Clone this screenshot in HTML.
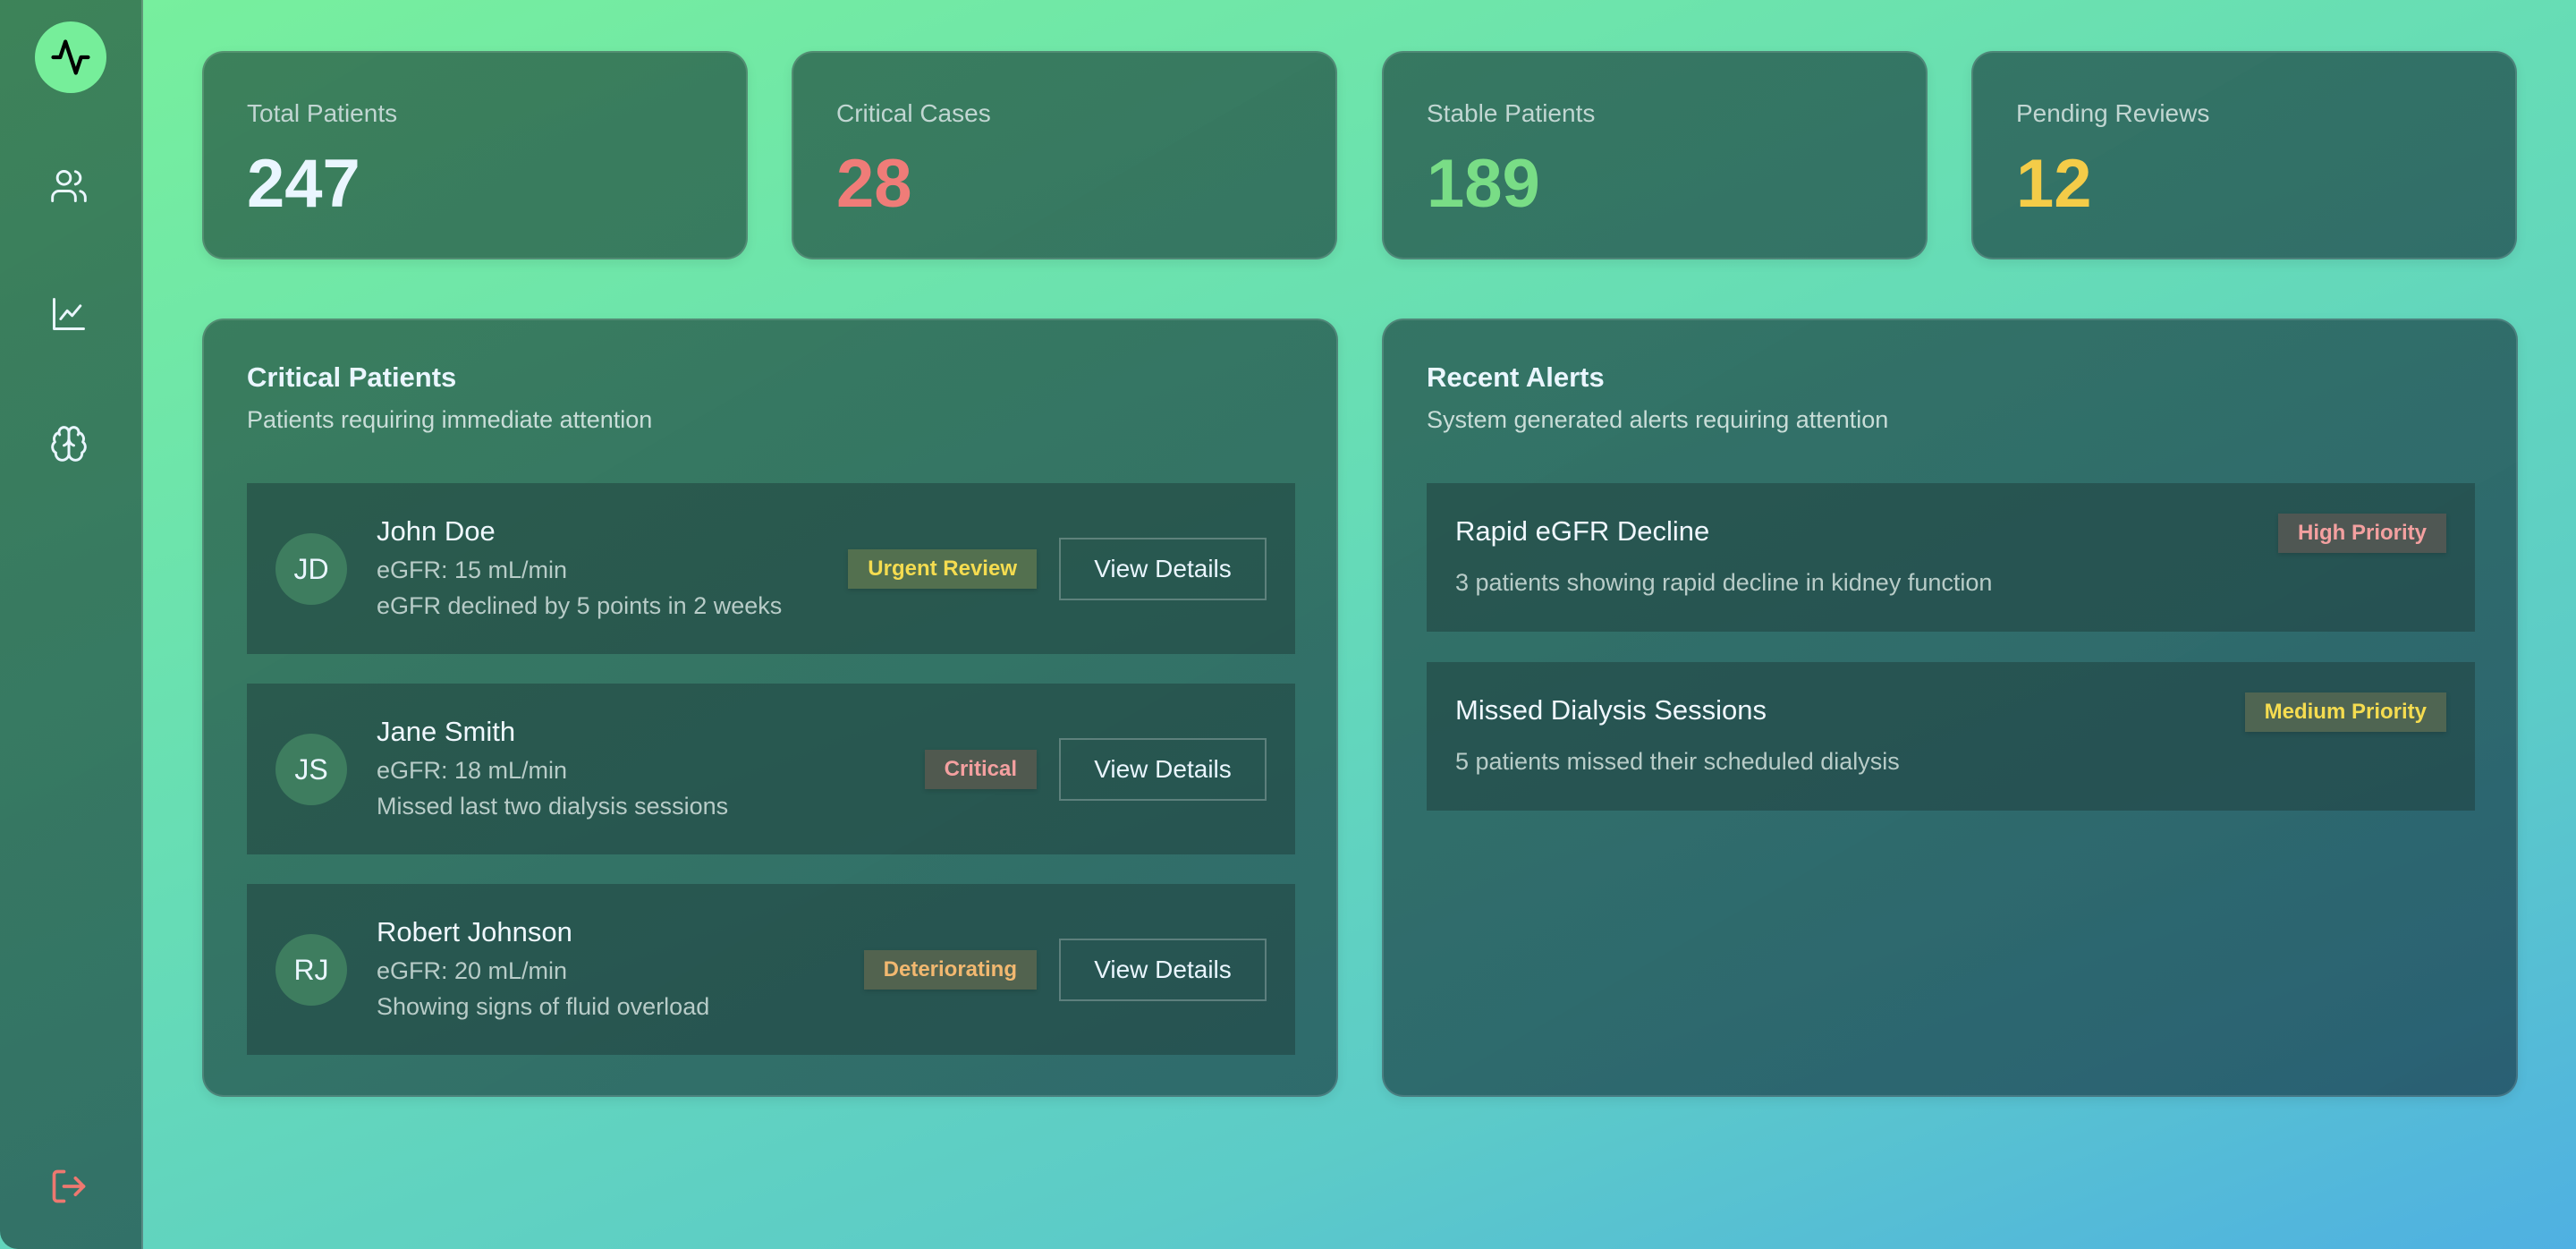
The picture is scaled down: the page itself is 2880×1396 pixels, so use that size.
<!DOCTYPE html>
<html><head><meta charset="utf-8"><style>
*{box-sizing:border-box;margin:0;padding:0}
html,body{width:2880px;height:1396px;overflow:hidden}
body{font-family:"Liberation Sans",sans-serif;background:linear-gradient(160deg,#78f09c 0%,#66dcb6 45%,#5ccbc8 75%,#4fb0e2 100%);position:relative;color:#eaf6ff}
.side{position:absolute;left:0;top:0;width:160px;height:1396px;background:linear-gradient(150deg,rgba(45,100,70,0.78),rgba(30,72,92,0.8)) fixed;border-right:2px solid rgba(255,255,255,0.18);border-radius:0 0 0 20px}
.logo{position:absolute;left:39px;top:24px;width:80px;height:80px;border-radius:50%;background:#76ee9a}
.ic{position:absolute;left:55px;width:44px;height:44px}
.card{position:absolute;background:linear-gradient(150deg,rgba(45,100,70,0.78),rgba(30,72,92,0.8)) fixed;border:2px solid rgba(255,255,255,0.13);border-radius:24px;box-shadow:0 4px 12px rgba(0,0,0,0.08)}
.stat{top:57px;width:610px;height:233px}
.lab{position:absolute;left:48px;top:52px;font-size:28px;color:#c1d6d2}
.num{position:absolute;left:48px;top:103px;font-size:76px;font-weight:bold}
.title{position:absolute;left:48px;font-size:31px;font-weight:bold}
.sub{position:absolute;left:48px;font-size:27px;color:#c9ddd8}
.row{position:absolute;background:rgba(30,60,58,0.5)}
.av{position:absolute;left:32px;width:80px;height:80px;border-radius:50%;background:#3e7d5f;font-size:32px;text-align:center;line-height:80px;color:#eaf6ff}
.nm{position:absolute;font-size:31px;color:#f0f8ff}
.ln{position:absolute;font-size:27px;color:#b8ccc8}
.badge{position:absolute;height:44px;line-height:44px;font-size:24px;font-weight:bold;padding:0 22px;box-shadow:0 2px 5px rgba(0,0,0,0.15)}
.btn{position:absolute;right:32px;width:232px;height:70px;border:2px solid rgba(255,255,255,0.25);font-size:28px;text-align:center;line-height:66px;color:#eaf6ff}
</style></head><body>
<div class="side">
<div class="logo"><svg width="80" height="80" viewBox="0 0 24 24"><g transform="translate(5,5) scale(0.583)"><path d="M22 12h-4l-3 9L9 3l-3 9H2" fill="none" stroke="#000" stroke-width="2.2" stroke-linecap="round" stroke-linejoin="round"/></g></svg></div>
<svg class="ic" style="top:186px" viewBox="0 0 24 24" fill="none" stroke="#eaf6ff" stroke-width="1.6" stroke-linecap="round" stroke-linejoin="round"><path d="M16 21v-2a4 4 0 0 0-4-4H6a4 4 0 0 0-4 4v2"/><circle cx="9" cy="7" r="4"/><path d="M22 21v-2a4 4 0 0 0-3-3.87"/><path d="M16 3.13a4 4 0 0 1 0 7.75"/></svg>
<svg class="ic" style="top:329px" viewBox="0 0 24 24" fill="none" stroke="#eaf6ff" stroke-width="1.6" stroke-linecap="round" stroke-linejoin="round"><path d="M3 3v18h18"/><path d="m7 15 4-5 3 3 5-6"/></svg>
<svg class="ic" style="top:474px" viewBox="0 0 24 24" fill="none" stroke="#eaf6ff" stroke-width="1.6" stroke-linecap="round" stroke-linejoin="round"><path d="M12 5a3 3 0 1 0-5.997.125 4 4 0 0 0-2.526 5.77 4 4 0 0 0 .556 6.588A4 4 0 1 0 12 18Z"/><path d="M12 5a3 3 0 1 1 5.997.125 4 4 0 0 1 2.526 5.77 4 4 0 0 1-.556 6.588A4 4 0 1 1 12 18Z"/><path d="M12 5v13"/><path d="M9 13a4.5 4.5 0 0 0 3-4"/><path d="M15 13a4.5 4.5 0 0 1-3-4"/><path d="M6.003 5.125A3 3 0 0 0 6.401 6.5"/><path d="M17.997 5.125a3 3 0 0 1-.398 1.375"/></svg>
<svg class="ic" style="top:1304px" viewBox="0 0 24 24" fill="none" stroke="#ee7870" stroke-width="2" stroke-linecap="round" stroke-linejoin="round"><path d="M9 21H5a2 2 0 0 1-2-2V5a2 2 0 0 1 2-2h4"/><path d="M16 17l5-5-5-5"/><path d="M21 12H9"/></svg>
</div>

<div class="card stat" style="left:226px"><div class="lab">Total Patients</div><div class="num" style="color:#eaf6ff">247</div></div>
<div class="card stat" style="left:885px"><div class="lab">Critical Cases</div><div class="num" style="color:#ef7c78">28</div></div>
<div class="card stat" style="left:1545px"><div class="lab">Stable Patients</div><div class="num" style="color:#79dd86">189</div></div>
<div class="card stat" style="left:2204px"><div class="lab">Pending Reviews</div><div class="num" style="color:#f4cc48">12</div></div>

<div class="card" style="left:226px;top:356px;width:1270px;height:870px">
<div class="title" style="top:46px">Critical Patients</div>
<div class="sub" style="top:96px">Patients requiring immediate attention</div>
<div class="row" style="left:48px;top:182px;width:1172px;height:191px">
<div class="av" style="top:56px">JD</div>
<div class="nm" style="left:145px;top:36px">John Doe</div>
<div class="ln" style="left:145px;top:82px">eGFR: 15 mL/min</div>
<div class="ln" style="left:145px;top:122px">eGFR declined by 5 points in 2 weeks</div>
<div class="badge" style="right:289px;top:74px;background:#53704f;color:#f5dc50">Urgent Review</div>
<div class="btn" style="top:61px">View Details</div>
</div>
<div class="row" style="left:48px;top:406px;width:1172px;height:191px">
<div class="av" style="top:56px">JS</div>
<div class="nm" style="left:145px;top:36px">Jane Smith</div>
<div class="ln" style="left:145px;top:82px">eGFR: 18 mL/min</div>
<div class="ln" style="left:145px;top:122px">Missed last two dialysis sessions</div>
<div class="badge" style="right:289px;top:74px;background:#50594f;color:#f4a0a0">Critical</div>
<div class="btn" style="top:61px">View Details</div>
</div>
<div class="row" style="left:48px;top:630px;width:1172px;height:191px">
<div class="av" style="top:56px">RJ</div>
<div class="nm" style="left:145px;top:36px">Robert Johnson</div>
<div class="ln" style="left:145px;top:82px">eGFR: 20 mL/min</div>
<div class="ln" style="left:145px;top:122px">Showing signs of fluid overload</div>
<div class="badge" style="right:289px;top:74px;background:#52634f;color:#f2b870">Deteriorating</div>
<div class="btn" style="top:61px">View Details</div>
</div>
</div>

<div class="card" style="left:1545px;top:356px;width:1270px;height:870px">
<div class="title" style="top:46px">Recent Alerts</div>
<div class="sub" style="top:96px">System generated alerts requiring attention</div>
<div class="row" style="left:48px;top:182px;width:1172px;height:166px">
<div class="nm" style="left:32px;top:36px">Rapid eGFR Decline</div>
<div class="ln" style="left:32px;top:96px">3 patients showing rapid decline in kidney function</div>
<div class="badge" style="right:32px;top:34px;background:#4f5753;color:#f4a0a0">High Priority</div>
</div>
<div class="row" style="left:48px;top:382px;width:1172px;height:166px">
<div class="nm" style="left:32px;top:36px">Missed Dialysis Sessions</div>
<div class="ln" style="left:32px;top:96px">5 patients missed their scheduled dialysis</div>
<div class="badge" style="right:32px;top:34px;background:#4f6552;color:#f5dc50">Medium Priority</div>
</div>
</div>
</body></html>
